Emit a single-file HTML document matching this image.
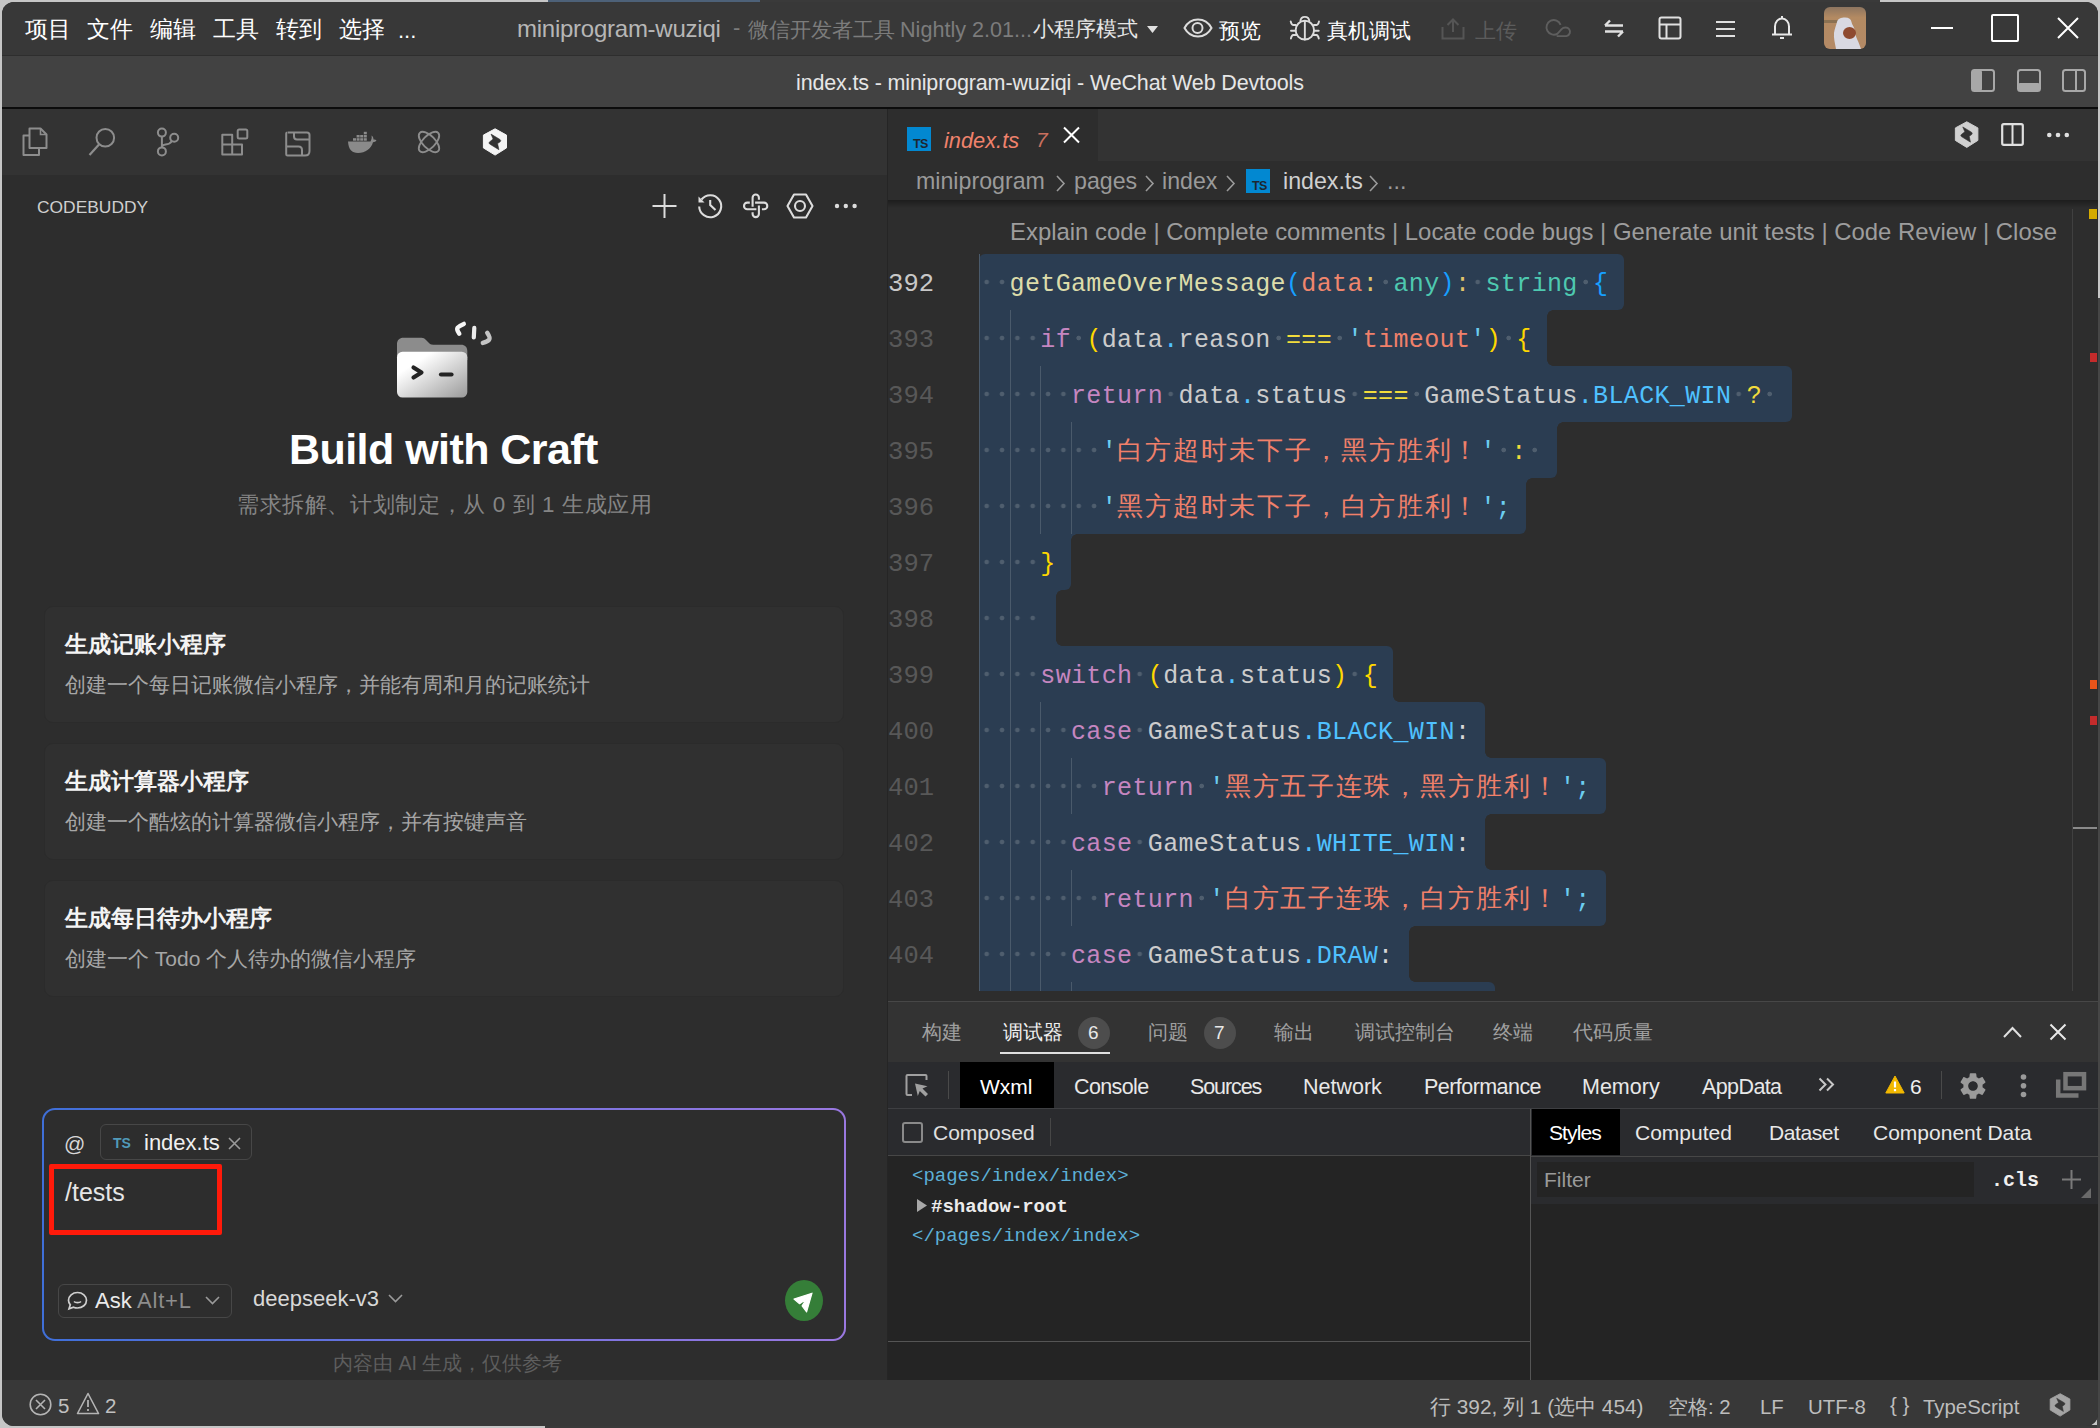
<!DOCTYPE html>
<html><head><meta charset="utf-8">
<style>
html,body{margin:0;padding:0}
body{width:2100px;height:1428px;overflow:hidden;position:relative;background:#c6c6c6;font-family:"Liberation Sans",sans-serif}
.a{position:absolute}
.t{position:absolute;white-space:pre;line-height:1;font-family:"Liberation Sans",sans-serif}
.m{font-family:"Liberation Mono",monospace}
svg{position:absolute;overflow:visible}
#win{position:absolute;left:0;top:0;width:2100px;height:1428px;clip-path:inset(2px 2px 2px 2px round 12px);background:#2d2d2d}
.code .ln{position:absolute;left:0;height:56px;white-space:pre}
.cl{font-size:25px;letter-spacing:0.35px;white-space:pre}
.w{background:radial-gradient(circle at 50% calc(50% - 2.5px),#4f5e6e 0,#4f5e6e 1.9px,rgba(79,94,110,0) 2.7px) 0 0/15.35px 100% repeat-x}
.cj{display:inline-block;font-size:26px;letter-spacing:1.95px;white-space:nowrap;overflow:hidden;vertical-align:top;position:relative;top:-2.5px;font-family:"Liberation Sans",sans-serif}
</style></head><body>
<!-- outside strips -->
<div class="a" style="left:548px;top:0;width:212px;height:3px;background:#4d6178"></div>
<div class="a" style="left:760px;top:0;width:1120px;height:3px;background:#3a3a3a"></div>
<div class="a" style="left:545px;top:1425px;width:1560px;height:3px;background:#3a3a3a"></div>
<div class="a" style="left:2097px;top:298px;width:3px;height:1130px;background:#464646"></div>
<div id="win">
  <!-- title bar -->
  <div class="a" style="left:0;top:0;width:2100px;height:55px;background:#383838"></div>
  <div class="a" style="left:0;top:55px;width:2100px;height:1px;background:#2e2e2e"></div>
  <!-- second bar -->
  <div class="a" style="left:0;top:56px;width:2100px;height:52px;background:#424242"></div>
  <div class="a" style="left:0;top:107px;width:2100px;height:2px;background:#0c0c0c"></div>
  <!-- left activity row -->
  <div class="a" style="left:0;top:109px;width:888px;height:66px;background:#333333"></div>
  <!-- left panel -->
  <div class="a" style="left:0;top:175px;width:887px;height:1205px;background:#2d2d2d"></div>
  <div class="a" style="left:887px;top:109px;width:1px;height:1271px;background:#252525"></div>
  <!-- editor tab bar -->
  <div class="a" style="left:888px;top:109px;width:1212px;height:52px;background:#333333"></div>
  <div class="a" style="left:888px;top:109px;width:210px;height:52px;background:#2d2d2d"></div>
  <!-- breadcrumbs -->
  <div class="a" style="left:888px;top:161px;width:1212px;height:39px;background:#2d2d2d"></div>
  <div class="a" style="left:888px;top:200px;width:1212px;height:8px;background:linear-gradient(#1d1d1d,#2d2d2d)"></div>
  <!-- panel -->
  <div class="a" style="left:888px;top:1001px;width:1212px;height:1px;background:#474747"></div>
  <div class="a" style="left:888px;top:1002px;width:1212px;height:60px;background:#333333"></div>
  <div class="a" style="left:888px;top:1062px;width:1212px;height:46px;background:#2a2b2e"></div>
  <div class="a" style="left:888px;top:1108px;width:1212px;height:272px;background:#242424"></div>
  <!-- status bar -->
  <div class="a" style="left:0;top:1380px;width:2100px;height:48px;background:#383838"></div>

  <!-- ===== TITLE BAR CONTENT ===== -->
  <div class="t" style="left:25px;top:18px;font-size:23px;color:#fff">项目</div>
  <div class="t" style="left:87px;top:18px;font-size:23px;color:#fff">文件</div>
  <div class="t" style="left:150px;top:18px;font-size:23px;color:#fff">编辑</div>
  <div class="t" style="left:213px;top:18px;font-size:23px;color:#fff">工具</div>
  <div class="t" style="left:276px;top:18px;font-size:23px;color:#fff">转到</div>
  <div class="t" style="left:339px;top:18px;font-size:23px;color:#fff">选择</div>
  <div class="t" style="left:398px;top:20px;font-size:22px;color:#fff">...</div>
  <div class="t" style="left:517px;top:17px;font-size:24px;letter-spacing:-0.25px;color:#b6b6b6">miniprogram-wuziqi</div>
  <div class="t" style="left:733px;top:17px;font-size:22px;color:#7c7c7c">-</div>
  <div class="t" style="left:748px;top:19px;font-size:21px;color:#7c7c7c">微信开发者工具</div>
  <div class="t" style="left:900px;top:19px;font-size:21.6px;color:#7c7c7c">Nightly 2.01...</div>
  <div class="t" style="left:1033px;top:19px;font-size:21.4px;color:#e6e6e6">小程序模式</div>
  <svg style="left:1147px;top:26px" width="11" height="7"><path d="M0 0H11L5.5 7Z" fill="#e0e0e0"/></svg>
  <!-- eye -->
  <svg style="left:1183px;top:18px" width="30" height="20" viewBox="0 0 30 20"><path d="M1.5 10C5 3.5 9.5 1.5 15 1.5S25 3.5 28.5 10C25 16.5 20.5 18.5 15 18.5S5 16.5 1.5 10Z" fill="none" stroke="#dcdcdc" stroke-width="2"/><circle cx="14.5" cy="10" r="5" fill="none" stroke="#dcdcdc" stroke-width="2"/></svg>
  <div class="t" style="left:1219px;top:20px;font-size:21px;color:#fff">预览</div>
  <!-- bug -->
  <svg style="left:1289px;top:16px" width="32" height="25" viewBox="0 0 32 25"><ellipse cx="15.85" cy="14.15" rx="9.2" ry="9.4" fill="none" stroke="#dcdcdc" stroke-width="1.9"/><path d="M11.3 5.5C11.6 2.5 13.5 0.9 15.85 0.9S20.1 2.5 20.4 5.5" fill="none" stroke="#dcdcdc" stroke-width="1.9"/><path d="M15.85 5V23.5M1.7 5.4Q2.5 9 4 9H6.8M30 5.4Q29.2 9 27.7 9H24.9M2 14.8H6.6M29.7 14.8H25.1M1.9 22.5Q2.6 19.1 4.3 19H7.5M29.8 22.5Q29.1 19.1 27.4 19H24.2" fill="none" stroke="#dcdcdc" stroke-width="1.9" stroke-linecap="round"/></svg>
  <div class="t" style="left:1327px;top:20px;font-size:21px;color:#fff">真机调试</div>
  <!-- upload -->
  <svg style="left:1441px;top:18px" width="24" height="22" viewBox="0 0 24 22"><path d="M1.5 9V20.5H22.5V9M12 1.5V14M6.5 7L12 1.5 17.5 7" fill="none" stroke="#555" stroke-width="2"/></svg>
  <div class="t" style="left:1475px;top:20px;font-size:21px;color:#5c5c5c">上传</div>
  <!-- cloud loop -->
  <svg style="left:1545px;top:18px" width="27" height="21" viewBox="0 0 27 21"><path d="M15.6 6.8A7.3 7.3 0 1 0 12.6 15.6L16.6 11.2C18.6 9 22.4 8.8 24.2 11.3 25.7 13.4 25.2 17.2 21.4 18.1H11.7" fill="none" stroke="#5e5e5e" stroke-width="1.9"/></svg>
  <!-- swap -->
  <svg style="left:1603px;top:19px" width="22" height="19" viewBox="0 0 22 19"><path d="M2 6.5H20M2 6.5L7 1.5M20 12.5H2M20 12.5L15 17.5" fill="none" stroke="#e0e0e0" stroke-width="2.4"/></svg>
  <!-- layout -->
  <svg style="left:1658px;top:16px" width="24" height="24" viewBox="0 0 24 24"><rect x="1.5" y="1.5" width="21" height="21" rx="2" fill="none" stroke="#e0e0e0" stroke-width="2"/><path d="M1.5 8.5H22.5M8.5 8.5V22.5" stroke="#e0e0e0" stroke-width="2"/></svg>
  <!-- hamburger -->
  <svg style="left:1716px;top:20px" width="20" height="18" viewBox="0 0 20 18"><path d="M0 2H19M0 9H19M0 16H19" stroke="#e0e0e0" stroke-width="2"/></svg>
  <!-- bell -->
  <svg style="left:1771px;top:15px" width="22" height="26" viewBox="0 0 22 26"><path d="M4 19V11.5C4 7 7 3.5 11 3.5S18 7 18 11.5V19M1 19.5H21M11 1V3.5M9 23H13" fill="none" stroke="#e8e8e8" stroke-width="2"/></svg>
  <!-- avatar -->
  <svg style="left:1824px;top:7px" width="42" height="42" viewBox="0 0 42 42"><defs><clipPath id="avc"><rect width="42" height="42" rx="6"/></clipPath><linearGradient id="avg" x1="0" y1="0" x2="0" y2="1"><stop offset="0" stop-color="#8d7560"/><stop offset="0.25" stop-color="#b38a62"/><stop offset="1" stop-color="#b48a66"/></linearGradient></defs><g clip-path="url(#avc)"><rect width="42" height="42" fill="url(#avg)"/><rect x="0" y="13" width="14" height="3" fill="#6f6048" opacity="0.6"/><path d="M12 42C11 36 9.5 31 10 26 10.5 22 12 19 13 15 14 11.5 17 10.5 21 10.5S27 12 27.5 15C28.5 19 31 21 31 25 31 29 35 35 37 42Z" fill="#d9d9e2"/><ellipse cx="25.5" cy="26" rx="6.5" ry="6" fill="#8e4a30"/></g></svg>
  <!-- window controls -->
  <div class="a" style="left:1931px;top:27px;width:22px;height:2px;background:#fff"></div>
  <div class="a" style="left:1991px;top:14px;width:24px;height:24px;border:2px solid #fff;border-radius:2px"></div>
  <svg style="left:2057px;top:17px" width="22" height="22" viewBox="0 0 22 22"><path d="M1 1L21 21M21 1L1 21" stroke="#fff" stroke-width="2"/></svg>

  <!-- ===== SECOND BAR ===== -->
  <div class="t" style="left:796px;top:73px;font-size:21.5px;letter-spacing:-0.15px;color:#e6e6e6">index.ts - miniprogram-wuziqi - WeChat Web Devtools</div>
  <svg style="left:1971px;top:69px" width="24" height="23" viewBox="0 0 24 23"><rect x="1" y="1" width="22" height="21" rx="2.5" fill="none" stroke="#a8a8a8" stroke-width="2"/><rect x="1" y="1" width="10" height="21" rx="2" fill="#a8a8a8"/></svg>
  <svg style="left:2017px;top:69px" width="24" height="23" viewBox="0 0 24 23"><rect x="1" y="1" width="22" height="21" rx="2.5" fill="none" stroke="#a8a8a8" stroke-width="2"/><rect x="1" y="14" width="22" height="8" rx="2" fill="#a8a8a8"/></svg>
  <svg style="left:2062px;top:69px" width="24" height="23" viewBox="0 0 24 23"><rect x="1" y="1" width="22" height="21" rx="2.5" fill="none" stroke="#a8a8a8" stroke-width="2"/><path d="M14 1V22" stroke="#a8a8a8" stroke-width="2"/></svg>
  <!-- ===== LEFT ACTIVITY ICONS ===== -->
  <svg style="left:21px;top:127px" width="28" height="30" viewBox="0 0 28 30"><path d="M8.5 8.5H2.5V28H18V22" fill="none" stroke="#8d8d8d" stroke-width="2" stroke-linejoin="round"/><path d="M8.5 1.5H19.5L25.5 7.5V21H8.5Z" fill="none" stroke="#8d8d8d" stroke-width="2" stroke-linejoin="round"/><path d="M19.5 1.5V7.5H25.5" fill="none" stroke="#8d8d8d" stroke-width="1.6"/></svg>
  <svg style="left:88px;top:127px" width="30" height="30" viewBox="0 0 30 30"><circle cx="17.3" cy="10.7" r="8.8" fill="none" stroke="#8d8d8d" stroke-width="2"/><path d="M11 17.5L1.5 28" stroke="#8d8d8d" stroke-width="2.2"/></svg>
  <svg style="left:155px;top:127px" width="26" height="30" viewBox="0 0 26 30"><circle cx="6.9" cy="5.6" r="4" fill="none" stroke="#8d8d8d" stroke-width="2"/><circle cx="6.9" cy="24.4" r="4" fill="none" stroke="#8d8d8d" stroke-width="2"/><circle cx="19.2" cy="10.7" r="4" fill="none" stroke="#8d8d8d" stroke-width="2"/><path d="M6.9 9.6V20.4M17 14C15.5 16.5 13 17.3 10.5 17.5C8.5 17.7 7 18.5 6.9 20" fill="none" stroke="#8d8d8d" stroke-width="2"/></svg>
  <svg style="left:219px;top:127px" width="31" height="30" viewBox="0 0 31 30"><path d="M3.3 7.7H13.2V17.5H23V27.4H3.3Z" fill="none" stroke="#8d8d8d" stroke-width="2" stroke-linejoin="round"/><path d="M3.3 17.5H13.2V27.4" fill="none" stroke="#8d8d8d" stroke-width="2"/><rect x="18.7" y="2.6" width="9.6" height="9" rx="1.5" fill="none" stroke="#8d8d8d" stroke-width="2"/></svg>
  <svg style="left:285px;top:131px" width="26" height="26" viewBox="0 0 26 26"><path d="M3 1.5H22C23.5 1.5 24.5 2.5 24.5 4V20M24.5 20C24.5 23 23 24.5 20 24.5H2.5C1.8 24.5 1.2 24 1.2 23.3V2.5C1.2 2 1.8 1.5 2.5 1.5" fill="none" stroke="#8d8d8d" stroke-width="2"/><path d="M9 1.5V5.5C9 7.5 10 8.5 12 8.5H24.5M1.2 15.5H13.5C15.5 15.5 17 17 17 19V24.5" fill="none" stroke="#8d8d8d" stroke-width="2"/></svg>
  <svg style="left:347px;top:131px" width="30" height="23" viewBox="0 0 30 23"><path d="M1 10.5H23.5C24.5 8.5 25 7 24.5 4.5C26 5.5 26.5 7 26.5 8.5C27.5 8.2 28.5 8.5 29.5 9.3C28.5 10.8 27.5 11.2 26 11.3C24 18 18.5 22 11 22C5 22 1.5 18.5 1 10.5Z" fill="#8a8a8a"/><rect x="6" y="7.2" width="3" height="2.5" fill="#8a8a8a"/><rect x="9.6" y="7.2" width="3" height="2.5" fill="#8a8a8a"/><rect x="13.2" y="7.2" width="3" height="2.5" fill="#8a8a8a"/><rect x="16.8" y="7.2" width="3" height="2.5" fill="#8a8a8a"/><rect x="9.6" y="4" width="3" height="2.5" fill="#8a8a8a"/><rect x="13.2" y="4" width="3" height="2.5" fill="#8a8a8a"/><rect x="16.8" y="4" width="3" height="2.5" fill="#8a8a8a"/><rect x="16.8" y="0.8" width="3" height="2.5" fill="#8a8a8a"/></svg>
  <svg style="left:416px;top:129px" width="26" height="26" viewBox="0 0 26 26"><ellipse cx="13" cy="13" rx="13" ry="6.2" transform="rotate(45 13 13)" fill="none" stroke="#8d8d8d" stroke-width="1.9"/><ellipse cx="13" cy="13" rx="13" ry="6.2" transform="rotate(-45 13 13)" fill="none" stroke="#8d8d8d" stroke-width="1.9"/></svg>
  <svg style="left:482px;top:128px" width="26" height="28" viewBox="0 0 26 28"><path d="M13.1 0.8L24.5 7.1V19.9L13.1 27.1 1.4 19.9V7.1Z" fill="#f4f4f4" stroke="#f4f4f4" stroke-width="1" stroke-linejoin="round"/><path d="M9 6.1L18 11.5Q19.4 12.6 18.2 13.8L15.6 15.6 16.9 21.7 7.6 16Q6.3 15 7.5 13.9L11.1 11.1Z" fill="#333" stroke="#333" stroke-width="0.6" stroke-linejoin="round"/></svg>

  <!-- ===== CODEBUDDY HEADER ===== -->
  <div class="t" style="left:37px;top:199px;font-size:17.4px;color:#cfcfcf">CODEBUDDY</div>
  <svg style="left:652px;top:194px" width="25" height="24" viewBox="0 0 25 24"><path d="M0.5 12H24.5M12.5 0V24" stroke="#dcdcdc" stroke-width="2"/></svg>
  <svg style="left:697px;top:193px" width="27" height="27" viewBox="0 0 27 27"><path d="M4.5 6.5A11 11 0 1 1 2.2 13.5" fill="none" stroke="#dcdcdc" stroke-width="2.1"/><path d="M1.5 3.5V9.5H7.5Z" fill="#dcdcdc"/><path d="M13.2 7V12L18.5 17" fill="none" stroke="#dcdcdc" stroke-width="2.1"/></svg>
  <svg style="left:742px;top:192px" width="28" height="28" viewBox="0 0 28 28"><path d="M10.6 14.7V5.7A3.15 3.15 0 0 1 16.9 5.7V7.8M13.1 10.6H22A3.3 3.3 0 0 1 22 17.2H19.9M16.9 13.6V22A3.15 3.15 0 0 1 10.6 22V20.2M14.4 17.2H5.3A3.3 3.3 0 0 1 5.3 10.6H7.8" fill="none" stroke="#dcdcdc" stroke-width="2.1"/></svg>
  <svg style="left:786px;top:193px" width="28" height="26" viewBox="0 0 28 26"><path d="M8 1.5H20L26.5 13 20 24.5H8L1.5 13Z" fill="none" stroke="#dcdcdc" stroke-width="2.1" stroke-linejoin="round"/><circle cx="14" cy="13" r="5" fill="none" stroke="#dcdcdc" stroke-width="2.1"/></svg>
  <svg style="left:834px;top:203px" width="24" height="6" viewBox="0 0 24 6"><circle cx="3" cy="3" r="2.2" fill="#dcdcdc"/><circle cx="11.8" cy="3" r="2.2" fill="#dcdcdc"/><circle cx="20.6" cy="3" r="2.2" fill="#dcdcdc"/></svg>

  <!-- ===== BUILD WITH CRAFT ===== -->
  <svg style="left:395px;top:320px" width="100" height="80" viewBox="0 0 100 80">
    <defs><linearGradient id="fg" x1="0" y1="0" x2="1" y2="1"><stop offset="0.25" stop-color="#ffffff"/><stop offset="1" stop-color="#9a9a9a"/></linearGradient>
    <linearGradient id="sg" x1="0" y1="0" x2="1" y2="1"><stop offset="0" stop-color="#ffffff"/><stop offset="1" stop-color="#b0b0b0"/></linearGradient></defs>
    <path d="M2 24C2 20 4.5 17.7 8.5 17.7H26.5C28.5 17.7 29.5 18.5 31 20L34.5 23.5C35.5 24.3 36.5 24.7 38 24.7H66C70 24.7 72.3 27 72.3 31V40H2Z" fill="#8c8c8c"/>
    <rect x="2" y="31.7" width="70.3" height="45.8" rx="5.5" fill="url(#fg)"/>
    <path d="M18.5 47.5L26.5 52.5 18.5 57.5" fill="none" stroke="#232323" stroke-width="4.2" stroke-linecap="round" stroke-linejoin="round"/>
    <path d="M46 54.5H56.5" stroke="#232323" stroke-width="4.2" stroke-linecap="round"/>
    <path d="M64.3 13.8Q61.2 9.2 62.6 7.6T68.8 3.9" fill="none" stroke="#f6f6f6" stroke-width="4.4" stroke-linecap="round" stroke-linejoin="round"/>
    <path d="M79.3 7.8L78.8 17.5" stroke="#ececec" stroke-width="4.2" stroke-linecap="round"/>
    <path d="M92.2 12.8Q95.6 17.8 94.2 19.6T87.8 22.9" fill="none" stroke="#c4c4c4" stroke-width="4.4" stroke-linecap="round" stroke-linejoin="round"/>
  </svg>
  <div class="t" style="left:289px;top:428px;font-size:43px;letter-spacing:-0.55px;font-weight:700;color:#ffffff">Build with Craft</div>
  <div class="t" style="left:237px;top:494px;font-size:22.4px;letter-spacing:0.62px;color:#858585">需求拆解、计划制定，从 0 到 1 生成应用</div>

  <!-- ===== CARDS ===== -->
  <div class="a" style="left:44px;top:606px;width:800px;height:117px;border-radius:9px;background:#303030;border:1px solid #2b2b2b;box-sizing:border-box"></div>
  <div class="t" style="left:65px;top:633px;font-size:23px;font-weight:700;color:#f4f4f4">生成记账小程序</div>
  <div class="t" style="left:65px;top:674px;font-size:21px;color:#a6a6a6">创建一个每日记账微信小程序，并能有周和月的记账统计</div>
  <div class="a" style="left:44px;top:743px;width:800px;height:117px;border-radius:9px;background:#303030;border:1px solid #2b2b2b;box-sizing:border-box"></div>
  <div class="t" style="left:65px;top:770px;font-size:23px;font-weight:700;color:#f4f4f4">生成计算器小程序</div>
  <div class="t" style="left:65px;top:811px;font-size:21px;color:#a6a6a6">创建一个酷炫的计算器微信小程序，并有按键声音</div>
  <div class="a" style="left:44px;top:880px;width:800px;height:117px;border-radius:9px;background:#303030;border:1px solid #2b2b2b;box-sizing:border-box"></div>
  <div class="t" style="left:65px;top:907px;font-size:23px;font-weight:700;color:#f4f4f4">生成每日待办小程序</div>
  <div class="t" style="left:65px;top:948px;font-size:21px;color:#a6a6a6">创建一个 Todo 个人待办的微信小程序</div>

  <!-- ===== INPUT BOX ===== -->
  <div class="a" style="left:42px;top:1108px;width:804px;height:233px;border-radius:13px;background:linear-gradient(90deg,#3f6fd8,#6f72e0 50%,#9a78e0)"></div>
  <div class="a" style="left:44px;top:1110px;width:800px;height:229px;border-radius:11px;background:#2d2d2d"></div>
  <div class="t" style="left:64px;top:1133px;font-size:21px;color:#d8d8d8">@</div>
  <div class="a" style="left:100px;top:1124px;width:152px;height:36px;border:1px solid #474747;border-radius:6px;box-sizing:border-box"></div>
  <div class="t" style="left:113px;top:1136px;font-size:14px;font-weight:700;color:#519aba">TS</div>
  <div class="t" style="left:144px;top:1132px;font-size:22px;color:#f0f0f0">index.ts</div>
  <svg style="left:228px;top:1137px" width="13" height="13" viewBox="0 0 13 13"><path d="M1 1L12 12M12 1L1 12" stroke="#9a9a9a" stroke-width="1.6"/></svg>
  <div class="a" style="left:49px;top:1164px;width:173px;height:71px;border:5px solid #ff1a0a;border-radius:2px;box-sizing:border-box"></div>
  <div class="t" style="left:65px;top:1180px;font-size:25px;color:#e6e6e6">/tests</div>
  <div class="a" style="left:58px;top:1284px;width:174px;height:34px;border:1px solid #474747;border-radius:6px;box-sizing:border-box"></div>
  <svg style="left:67px;top:1291px" width="21" height="20" viewBox="0 0 21 20"><path d="M10.5 1.5C15.5 1.5 19.5 5 19.5 9.3S15.5 17 10.5 17C9 17 7.7 16.7 6.5 16.2L2 17.8 3.3 13.8C2.1 12.5 1.5 11 1.5 9.3 1.5 5 5.5 1.5 10.5 1.5Z" fill="none" stroke="#cfcfcf" stroke-width="1.7"/><path d="M7 10.5C8.3 12 12.7 12 14 10.5" fill="none" stroke="#cfcfcf" stroke-width="1.6"/></svg>
  <div class="t" style="left:95px;top:1290px;font-size:22px;color:#eaeaea">Ask</div>
  <div class="t" style="left:137px;top:1290px;font-size:22px;letter-spacing:0.8px;color:#8d8d8d">Alt+L</div>
  <svg style="left:205px;top:1296px" width="15" height="9" viewBox="0 0 15 9"><path d="M1 1L7.5 7.5 14 1" fill="none" stroke="#9a9a9a" stroke-width="1.6"/></svg>
  <div class="t" style="left:253px;top:1288px;font-size:22px;color:#d8d8d8">deepseek-v3</div>
  <svg style="left:388px;top:1294px" width="15" height="9" viewBox="0 0 15 9"><path d="M1 1L7.5 7.5 14 1" fill="none" stroke="#9a9a9a" stroke-width="1.6"/></svg>
  <div class="a" style="left:785px;top:1280px;width:38px;height:41px;border-radius:50%;background:#357e38"></div>
  <svg style="left:785px;top:1280px" width="38" height="41" viewBox="0 0 38 41"><path d="M27 13.2L9 19.1 14.6 23.7 21.3 19.3 17.1 25.8 21.6 31.9Z" fill="#fff" stroke="#fff" stroke-width="1.2" stroke-linejoin="round"/></svg>
  <div class="t" style="left:333px;top:1354px;font-size:19.6px;color:#5e5e5e">内容由 AI 生成，仅供参考</div>

  <!-- ===== EDITOR TABS ===== -->
  <svg style="left:907px;top:127px" width="24" height="24" viewBox="0 0 24 24"><rect width="24" height="24" fill="#0288d1"/><text x="6" y="21" font-family="Liberation Sans" font-size="12.5" font-weight="700" fill="#1d2730" letter-spacing="-0.6">TS</text></svg>
  <div class="t" style="left:944px;top:130px;font-size:21.8px;font-style:italic;color:#f0826c">index.ts</div>
  <div class="t" style="left:1036px;top:129px;font-size:21px;font-style:italic;color:#c8705e">7</div>
  <svg style="left:1063px;top:127px" width="17" height="16" viewBox="0 0 17 16"><path d="M1 0.5L16 15.5M16 0.5L1 15.5" stroke="#ffffff" stroke-width="2"/></svg>
  <svg style="left:1954.3px;top:121px" width="25.35" height="27.3" viewBox="0 0 26 28"><path d="M13.1 0.8L24.5 7.1V19.9L13.1 27.1 1.4 19.9V7.1Z" fill="#d0d0d0" stroke="#d0d0d0" stroke-width="1" stroke-linejoin="round"/><path d="M9 6.1L18 11.5Q19.4 12.6 18.2 13.8L15.6 15.6 16.9 21.7 7.6 16Q6.3 15 7.5 13.9L11.1 11.1Z" fill="#333" stroke="#333" stroke-width="0.6" stroke-linejoin="round"/></svg>
  <svg style="left:2001px;top:123px" width="23" height="23" viewBox="0 0 23 23"><rect x="1.2" y="1.2" width="20.6" height="20.6" rx="1.5" fill="none" stroke="#e0e0e0" stroke-width="2.2"/><path d="M11.5 1.5V21.5" stroke="#e0e0e0" stroke-width="2"/></svg>
  <svg style="left:2046px;top:132px" width="24" height="6" viewBox="0 0 24 6"><circle cx="3.3" cy="3" r="2.3" fill="#e0e0e0"/><circle cx="12" cy="3" r="2.3" fill="#e0e0e0"/><circle cx="20.8" cy="3" r="2.3" fill="#e0e0e0"/></svg>
  <!-- ===== BREADCRUMBS ===== -->
  <div class="t" style="left:916px;top:170px;font-size:23.2px;color:#9a9a9a">miniprogram</div>
  <svg style="left:1056px;top:175px" width="9" height="17" viewBox="0 0 9 17"><path d="M1 1L8 8.5 1 16" fill="none" stroke="#9a9a9a" stroke-width="1.6"/></svg>
  <div class="t" style="left:1074px;top:170px;font-size:23.2px;color:#9a9a9a">pages</div>
  <svg style="left:1145px;top:175px" width="9" height="17" viewBox="0 0 9 17"><path d="M1 1L8 8.5 1 16" fill="none" stroke="#9a9a9a" stroke-width="1.6"/></svg>
  <div class="t" style="left:1162px;top:170px;font-size:23.2px;color:#9a9a9a">index</div>
  <svg style="left:1226px;top:175px" width="9" height="17" viewBox="0 0 9 17"><path d="M1 1L8 8.5 1 16" fill="none" stroke="#9a9a9a" stroke-width="1.6"/></svg>
  <svg style="left:1246px;top:169px" width="24" height="24" viewBox="0 0 24 24"><rect width="24" height="24" fill="#0288d1"/><text x="6" y="21" font-family="Liberation Sans" font-size="12.5" font-weight="700" fill="#1d2730" letter-spacing="-0.6">TS</text></svg>
  <div class="t" style="left:1283px;top:170px;font-size:23.2px;color:#d0d0d0">index.ts</div>
  <svg style="left:1369px;top:175px" width="9" height="17" viewBox="0 0 9 17"><path d="M1 1L8 8.5 1 16" fill="none" stroke="#9a9a9a" stroke-width="1.6"/></svg>
  <div class="t" style="left:1387px;top:170px;font-size:23.2px;color:#9a9a9a">...</div>
  <!-- ===== CODE LENS ===== -->
  <div class="t" style="left:1010px;top:220px;font-size:23.9px;color:#9d9d9d">Explain code | Complete comments | Locate code bugs | Generate unit tests | Code Review | Close</div>
<!--EDSTART-->
<div class="a" style="left:888px;top:209px;width:1184px;height:782px;overflow:hidden">
<div class="a" style="left:90.90px;top:45px;width:644.70px;height:56px;background:#2b3d52;border-radius:6px 6px 6px 0"></div>
<div class="a" style="left:90.90px;top:45px;width:1.2px;height:56px;background:#4a5a6b"></div>
<div class="a" style="left:90.90px;top:101px;width:567.95px;height:56px;background:#2b3d52;border-radius:0 0 0 0"></div>
<div class="a" style="left:658.85px;top:101px;width:6px;height:6px;background:radial-gradient(circle at 100% 100%,rgba(43,61,82,0) 5.5px,#2b3d52 6px)"></div>
<div class="a" style="left:658.85px;top:151px;width:6px;height:6px;background:radial-gradient(circle at 100% 0%,rgba(43,61,82,0) 5.5px,#2b3d52 6px)"></div>
<div class="a" style="left:90.90px;top:101px;width:1.2px;height:56px;background:#4a5a6b"></div>
<div class="a" style="left:121.60px;top:101px;width:1.2px;height:56px;background:#4a5a6b"></div>
<div class="a" style="left:90.90px;top:157px;width:813.55px;height:56px;background:#2b3d52;border-radius:0 6px 6px 0"></div>
<div class="a" style="left:90.90px;top:157px;width:1.2px;height:56px;background:#4a5a6b"></div>
<div class="a" style="left:121.60px;top:157px;width:1.2px;height:56px;background:#4a5a6b"></div>
<div class="a" style="left:152.30px;top:157px;width:1.2px;height:56px;background:#4a5a6b"></div>
<div class="a" style="left:90.90px;top:213px;width:578.25px;height:56px;background:#2b3d52;border-radius:0 0 6px 0"></div>
<div class="a" style="left:669.15px;top:213px;width:6px;height:6px;background:radial-gradient(circle at 100% 100%,rgba(43,61,82,0) 5.5px,#2b3d52 6px)"></div>
<div class="a" style="left:90.90px;top:213px;width:1.2px;height:56px;background:#4a5a6b"></div>
<div class="a" style="left:121.60px;top:213px;width:1.2px;height:56px;background:#4a5a6b"></div>
<div class="a" style="left:152.30px;top:213px;width:1.2px;height:56px;background:#4a5a6b"></div>
<div class="a" style="left:183.00px;top:213px;width:1.2px;height:56px;background:#4a5a6b"></div>
<div class="a" style="left:90.90px;top:269px;width:547.55px;height:56px;background:#2b3d52;border-radius:0 0 6px 0"></div>
<div class="a" style="left:638.45px;top:269px;width:6px;height:6px;background:radial-gradient(circle at 100% 100%,rgba(43,61,82,0) 5.5px,#2b3d52 6px)"></div>
<div class="a" style="left:90.90px;top:269px;width:1.2px;height:56px;background:#4a5a6b"></div>
<div class="a" style="left:121.60px;top:269px;width:1.2px;height:56px;background:#4a5a6b"></div>
<div class="a" style="left:152.30px;top:269px;width:1.2px;height:56px;background:#4a5a6b"></div>
<div class="a" style="left:183.00px;top:269px;width:1.2px;height:56px;background:#4a5a6b"></div>
<div class="a" style="left:90.90px;top:325px;width:92.10px;height:56px;background:#2b3d52;border-radius:0 0 6px 0"></div>
<div class="a" style="left:183.00px;top:325px;width:6px;height:6px;background:radial-gradient(circle at 100% 100%,rgba(43,61,82,0) 5.5px,#2b3d52 6px)"></div>
<div class="a" style="left:90.90px;top:325px;width:1.2px;height:56px;background:#4a5a6b"></div>
<div class="a" style="left:121.60px;top:325px;width:1.2px;height:56px;background:#4a5a6b"></div>
<div class="a" style="left:90.90px;top:381px;width:76.75px;height:56px;background:#2b3d52;border-radius:0 0 0 0"></div>
<div class="a" style="left:167.65px;top:381px;width:6px;height:6px;background:radial-gradient(circle at 100% 100%,rgba(43,61,82,0) 5.5px,#2b3d52 6px)"></div>
<div class="a" style="left:167.65px;top:431px;width:6px;height:6px;background:radial-gradient(circle at 100% 0%,rgba(43,61,82,0) 5.5px,#2b3d52 6px)"></div>
<div class="a" style="left:90.90px;top:381px;width:1.2px;height:56px;background:#4a5a6b"></div>
<div class="a" style="left:121.60px;top:381px;width:1.2px;height:56px;background:#4a5a6b"></div>
<div class="a" style="left:90.90px;top:437px;width:414.45px;height:56px;background:#2b3d52;border-radius:0 6px 0 0"></div>
<div class="a" style="left:505.35px;top:487px;width:6px;height:6px;background:radial-gradient(circle at 100% 0%,rgba(43,61,82,0) 5.5px,#2b3d52 6px)"></div>
<div class="a" style="left:90.90px;top:437px;width:1.2px;height:56px;background:#4a5a6b"></div>
<div class="a" style="left:121.60px;top:437px;width:1.2px;height:56px;background:#4a5a6b"></div>
<div class="a" style="left:90.90px;top:493px;width:506.55px;height:56px;background:#2b3d52;border-radius:0 6px 0 0"></div>
<div class="a" style="left:597.45px;top:543px;width:6px;height:6px;background:radial-gradient(circle at 100% 0%,rgba(43,61,82,0) 5.5px,#2b3d52 6px)"></div>
<div class="a" style="left:90.90px;top:493px;width:1.2px;height:56px;background:#4a5a6b"></div>
<div class="a" style="left:121.60px;top:493px;width:1.2px;height:56px;background:#4a5a6b"></div>
<div class="a" style="left:152.30px;top:493px;width:1.2px;height:56px;background:#4a5a6b"></div>
<div class="a" style="left:90.90px;top:549px;width:627.05px;height:56px;background:#2b3d52;border-radius:0 6px 6px 0"></div>
<div class="a" style="left:90.90px;top:549px;width:1.2px;height:56px;background:#4a5a6b"></div>
<div class="a" style="left:121.60px;top:549px;width:1.2px;height:56px;background:#4a5a6b"></div>
<div class="a" style="left:152.30px;top:549px;width:1.2px;height:56px;background:#4a5a6b"></div>
<div class="a" style="left:183.00px;top:549px;width:1.2px;height:56px;background:#4a5a6b"></div>
<div class="a" style="left:90.90px;top:605px;width:506.55px;height:56px;background:#2b3d52;border-radius:0 0 0 0"></div>
<div class="a" style="left:597.45px;top:605px;width:6px;height:6px;background:radial-gradient(circle at 100% 100%,rgba(43,61,82,0) 5.5px,#2b3d52 6px)"></div>
<div class="a" style="left:597.45px;top:655px;width:6px;height:6px;background:radial-gradient(circle at 100% 0%,rgba(43,61,82,0) 5.5px,#2b3d52 6px)"></div>
<div class="a" style="left:90.90px;top:605px;width:1.2px;height:56px;background:#4a5a6b"></div>
<div class="a" style="left:121.60px;top:605px;width:1.2px;height:56px;background:#4a5a6b"></div>
<div class="a" style="left:152.30px;top:605px;width:1.2px;height:56px;background:#4a5a6b"></div>
<div class="a" style="left:90.90px;top:661px;width:627.05px;height:56px;background:#2b3d52;border-radius:0 6px 6px 0"></div>
<div class="a" style="left:90.90px;top:661px;width:1.2px;height:56px;background:#4a5a6b"></div>
<div class="a" style="left:121.60px;top:661px;width:1.2px;height:56px;background:#4a5a6b"></div>
<div class="a" style="left:152.30px;top:661px;width:1.2px;height:56px;background:#4a5a6b"></div>
<div class="a" style="left:183.00px;top:661px;width:1.2px;height:56px;background:#4a5a6b"></div>
<div class="a" style="left:90.90px;top:717px;width:429.80px;height:56px;background:#2b3d52;border-radius:0 0 0 0"></div>
<div class="a" style="left:520.70px;top:717px;width:6px;height:6px;background:radial-gradient(circle at 100% 100%,rgba(43,61,82,0) 5.5px,#2b3d52 6px)"></div>
<div class="a" style="left:520.70px;top:767px;width:6px;height:6px;background:radial-gradient(circle at 100% 0%,rgba(43,61,82,0) 5.5px,#2b3d52 6px)"></div>
<div class="a" style="left:90.90px;top:717px;width:1.2px;height:56px;background:#4a5a6b"></div>
<div class="a" style="left:121.60px;top:717px;width:1.2px;height:56px;background:#4a5a6b"></div>
<div class="a" style="left:152.30px;top:717px;width:1.2px;height:56px;background:#4a5a6b"></div>
<div class="a" style="left:90.90px;top:773px;width:516.40px;height:56px;background:#2b3d52;border-radius:0 6px 6px 0"></div>
<div class="a" style="left:90.90px;top:773px;width:1.2px;height:56px;background:#4a5a6b"></div>
<div class="a" style="left:121.60px;top:773px;width:1.2px;height:56px;background:#4a5a6b"></div>
<div class="a" style="left:152.30px;top:773px;width:1.2px;height:56px;background:#4a5a6b"></div>
<div class="a" style="left:183.00px;top:773px;width:1.2px;height:56px;background:#4a5a6b"></div>
<div class="t m" style="left:0px;top:47.5px;width:46px;text-align:right;font-size:25.5px;line-height:56px;color:#c8c8c8">392</div>
<div class="t m cl" style="left:90.90px;top:47.5px;line-height:56px"><span class="w">  </span><span style="color:#dcdcaa">getGameOverMessage</span><span style="color:#179fff">(</span><span style="color:#f0866d">data</span><span style="color:#e2c56a">:</span><span class="w"> </span><span style="color:#4ec9b0">any</span><span style="color:#179fff">)</span><span style="color:#e2c56a">:</span><span class="w"> </span><span style="color:#4ec9b0">string</span><span class="w"> </span><span style="color:#179fff">{</span></div>
<div class="t m" style="left:0px;top:103.5px;width:46px;text-align:right;font-size:25.5px;line-height:56px;color:#585858">393</div>
<div class="t m cl" style="left:90.90px;top:103.5px;line-height:56px"><span class="w">    </span><span style="color:#c586c0">if</span><span class="w"> </span><span style="color:#ffd700">(</span><span style="color:#cccccc">data</span><span style="color:#4fc1ff">.</span><span style="color:#cccccc">reason</span><span class="w"> </span><span style="color:#f2dc3c">===</span><span class="w"> </span><span style="color:#6ccdf0">'</span><span style="color:#f0806a">timeout</span><span style="color:#6ccdf0">'</span><span style="color:#ffd700">)</span><span class="w"> </span><span style="color:#ffd700">{</span></div>
<div class="t m" style="left:0px;top:159.5px;width:46px;text-align:right;font-size:25.5px;line-height:56px;color:#585858">394</div>
<div class="t m cl" style="left:90.90px;top:159.5px;line-height:56px"><span class="w">      </span><span style="color:#c586c0">return</span><span class="w"> </span><span style="color:#cccccc">data</span><span style="color:#4fc1ff">.</span><span style="color:#cccccc">status</span><span class="w"> </span><span style="color:#f2dc3c">===</span><span class="w"> </span><span style="color:#cccccc">GameStatus</span><span style="color:#4fc1ff">.</span><span style="color:#4fc1ff">BLACK_WIN</span><span class="w"> </span><span style="color:#f2dc3c">?</span><span class="w"> </span></div>
<div class="t m" style="left:0px;top:215.5px;width:46px;text-align:right;font-size:25.5px;line-height:56px;color:#585858">395</div>
<div class="t m cl" style="left:90.90px;top:215.5px;line-height:56px"><span class="w">        </span><span style="color:#6ccdf0">'</span><span style="color:#f0806a"><span class="cj" style="width:363.35px">白方超时未下子，黑方胜利！</span></span><span style="color:#6ccdf0">'</span><span class="w"> </span><span style="color:#f2dc3c">:</span><span class="w"> </span></div>
<div class="t m" style="left:0px;top:271.5px;width:46px;text-align:right;font-size:25.5px;line-height:56px;color:#585858">396</div>
<div class="t m cl" style="left:90.90px;top:271.5px;line-height:56px"><span class="w">        </span><span style="color:#6ccdf0">'</span><span style="color:#f0806a"><span class="cj" style="width:363.35px">黑方超时未下子，白方胜利！</span></span><span style="color:#6ccdf0">'</span><span style="color:#6ccdf0">;</span></div>
<div class="t m" style="left:0px;top:327.5px;width:46px;text-align:right;font-size:25.5px;line-height:56px;color:#585858">397</div>
<div class="t m cl" style="left:90.90px;top:327.5px;line-height:56px"><span class="w">    </span><span style="color:#ffd700">}</span></div>
<div class="t m" style="left:0px;top:383.5px;width:46px;text-align:right;font-size:25.5px;line-height:56px;color:#585858">398</div>
<div class="t m cl" style="left:90.90px;top:383.5px;line-height:56px"><span class="w">    </span></div>
<div class="t m" style="left:0px;top:439.5px;width:46px;text-align:right;font-size:25.5px;line-height:56px;color:#585858">399</div>
<div class="t m cl" style="left:90.90px;top:439.5px;line-height:56px"><span class="w">    </span><span style="color:#c586c0">switch</span><span class="w"> </span><span style="color:#ffd700">(</span><span style="color:#cccccc">data</span><span style="color:#4fc1ff">.</span><span style="color:#cccccc">status</span><span style="color:#ffd700">)</span><span class="w"> </span><span style="color:#ffd700">{</span></div>
<div class="t m" style="left:0px;top:495.5px;width:46px;text-align:right;font-size:25.5px;line-height:56px;color:#585858">400</div>
<div class="t m cl" style="left:90.90px;top:495.5px;line-height:56px"><span class="w">      </span><span style="color:#c586c0">case</span><span class="w"> </span><span style="color:#cccccc">GameStatus</span><span style="color:#4fc1ff">.</span><span style="color:#4fc1ff">BLACK_WIN</span><span style="color:#d8d8d8">:</span></div>
<div class="t m" style="left:0px;top:551.5px;width:46px;text-align:right;font-size:25.5px;line-height:56px;color:#585858">401</div>
<div class="t m cl" style="left:90.90px;top:551.5px;line-height:56px"><span class="w">        </span><span style="color:#c586c0">return</span><span class="w"> </span><span style="color:#6ccdf0">'</span><span style="color:#f0806a"><span class="cj" style="width:335.40px">黑方五子连珠，黑方胜利！</span></span><span style="color:#6ccdf0">'</span><span style="color:#6ccdf0">;</span></div>
<div class="t m" style="left:0px;top:607.5px;width:46px;text-align:right;font-size:25.5px;line-height:56px;color:#585858">402</div>
<div class="t m cl" style="left:90.90px;top:607.5px;line-height:56px"><span class="w">      </span><span style="color:#c586c0">case</span><span class="w"> </span><span style="color:#cccccc">GameStatus</span><span style="color:#4fc1ff">.</span><span style="color:#4fc1ff">WHITE_WIN</span><span style="color:#d8d8d8">:</span></div>
<div class="t m" style="left:0px;top:663.5px;width:46px;text-align:right;font-size:25.5px;line-height:56px;color:#585858">403</div>
<div class="t m cl" style="left:90.90px;top:663.5px;line-height:56px"><span class="w">        </span><span style="color:#c586c0">return</span><span class="w"> </span><span style="color:#6ccdf0">'</span><span style="color:#f0806a"><span class="cj" style="width:335.40px">白方五子连珠，白方胜利！</span></span><span style="color:#6ccdf0">'</span><span style="color:#6ccdf0">;</span></div>
<div class="t m" style="left:0px;top:719.5px;width:46px;text-align:right;font-size:25.5px;line-height:56px;color:#585858">404</div>
<div class="t m cl" style="left:90.90px;top:719.5px;line-height:56px"><span class="w">      </span><span style="color:#c586c0">case</span><span class="w"> </span><span style="color:#cccccc">GameStatus</span><span style="color:#4fc1ff">.</span><span style="color:#4fc1ff">DRAW</span><span style="color:#d8d8d8">:</span></div>
</div>
<!--EDEND-->
  <!-- overview ruler -->
  <div class="a" style="left:2072px;top:209px;width:1px;height:782px;background:#404040"></div>
  <div class="a" style="left:2089px;top:209px;width:8px;height:10px;background:#d4aa00"></div>
  <div class="a" style="left:2090px;top:353px;width:7px;height:9px;background:#c42b2b"></div>
  <div class="a" style="left:2090px;top:680px;width:7px;height:9px;background:#e8541a"></div>
  <div class="a" style="left:2090px;top:716px;width:7px;height:9px;background:#c42b2b"></div>
  <div class="a" style="left:2073px;top:827px;width:24px;height:2px;background:#8a8a8a"></div>

  <!-- ===== PANEL TABS ===== -->
  <div class="t" style="left:922px;top:1022px;font-size:20px;color:#a0a0a0">构建</div>
  <div class="t" style="left:1003px;top:1022px;font-size:20px;color:#f0f0f0">调试器</div>
  <div class="a" style="left:1078px;top:1017px;width:32px;height:32px;border-radius:50%;background:#4d4d4d"></div>
  <div class="t" style="left:1088px;top:1023px;font-size:19px;color:#e8e8e8">6</div>
  <div class="a" style="left:1000px;top:1052px;width:110px;height:2px;background:#e0e0e0"></div>
  <div class="t" style="left:1148px;top:1022px;font-size:20px;color:#a0a0a0">问题</div>
  <div class="a" style="left:1204px;top:1017px;width:32px;height:32px;border-radius:50%;background:#4d4d4d"></div>
  <div class="t" style="left:1214px;top:1023px;font-size:19px;color:#e8e8e8">7</div>
  <div class="t" style="left:1274px;top:1022px;font-size:20px;color:#a0a0a0">输出</div>
  <div class="t" style="left:1355px;top:1022px;font-size:20px;color:#a0a0a0">调试控制台</div>
  <div class="t" style="left:1493px;top:1022px;font-size:20px;color:#a0a0a0">终端</div>
  <div class="t" style="left:1573px;top:1022px;font-size:20px;color:#a0a0a0">代码质量</div>
  <svg style="left:2003px;top:1026px" width="19" height="12" viewBox="0 0 19 12"><path d="M1 11L9.5 2 18 11" fill="none" stroke="#e0e0e0" stroke-width="2"/></svg>
  <svg style="left:2050px;top:1024px" width="16" height="16" viewBox="0 0 16 16"><path d="M0.5 0.5L15.5 15.5M15.5 0.5L0.5 15.5" stroke="#e8e8e8" stroke-width="2"/></svg>
  <!-- ===== DEVTOOLS TOOLBAR ===== -->
  <svg style="left:905px;top:1073px" width="26" height="26" viewBox="0 0 26 26"><path d="M7 22H2.5C2 22 1.5 21.5 1.5 21V3C1.5 2.5 2 2 2.5 2H20.5C21 2 21.5 2.5 21.5 3V7" fill="none" stroke="#a0a0a0" stroke-width="2"/><path d="M10 10.5L12.8 23 14.8 18 20.5 23.5 23 21 17.5 15.5 22.5 13.2Z" fill="#a0a0a0"/></svg>
  <div class="a" style="left:948px;top:1071px;width:1px;height:28px;background:#4a4a4a"></div>
  <div class="a" style="left:960px;top:1062px;width:94px;height:46px;background:#000000"></div>
  <div class="t" style="left:980px;top:1076px;font-size:21px;color:#ffffff">Wxml</div>
  <div class="t" style="left:1074px;top:1077px;font-size:21.5px;letter-spacing:-0.63px;color:#e8e8e8">Console</div>
  <div class="t" style="left:1190px;top:1077px;font-size:21.5px;letter-spacing:-1.1px;color:#e8e8e8">Sources</div>
  <div class="t" style="left:1303px;top:1077px;font-size:21.5px;color:#e8e8e8">Network</div>
  <div class="t" style="left:1424px;top:1077px;font-size:21.5px;letter-spacing:-0.55px;color:#e8e8e8">Performance</div>
  <div class="t" style="left:1582px;top:1077px;font-size:21.5px;color:#e8e8e8">Memory</div>
  <div class="t" style="left:1702px;top:1077px;font-size:21.5px;letter-spacing:-0.6px;color:#e8e8e8">AppData</div>
  <svg style="left:1818px;top:1077px" width="17" height="15" viewBox="0 0 17 15"><path d="M1.5 1.5L7.5 7.5 1.5 13.5M9 1.5L15 7.5 9 13.5" fill="none" stroke="#c8c8c8" stroke-width="2"/></svg>
  <svg style="left:1885px;top:1075px" width="20" height="19" viewBox="0 0 20 19"><path d="M10 1L19.2 18H0.8Z" fill="#f2b800" stroke="#f2b800" stroke-width="1" stroke-linejoin="round"/><path d="M10 6.5V12.5" stroke="#fff" stroke-width="2.2"/><rect x="8.9" y="14" width="2.2" height="2.2" fill="#fff"/></svg>
  <div class="t" style="left:1910px;top:1076px;font-size:21px;color:#f0f0f0">6</div>
  <div class="a" style="left:1941px;top:1071px;width:1px;height:28px;background:#4a4a4a"></div>
  <svg style="left:1957.4px;top:1069.9px" width="32" height="32" viewBox="0 0 24 24"><path fill="#9a9a9a" d="M19.14 12.94c.04-.3.06-.61.06-.94 0-.32-.02-.64-.07-.94l2.03-1.58c.18-.14.23-.41.12-.61l-1.92-3.32c-.12-.22-.37-.29-.59-.22l-2.39.96c-.5-.38-1.03-.7-1.62-.94l-.36-2.54c-.04-.24-.24-.41-.48-.41h-3.84c-.24 0-.43.17-.47.41l-.36 2.54c-.59.24-1.13.57-1.62.94l-2.39-.96c-.22-.08-.47 0-.59.22L2.74 8.87c-.12.21-.08.47.12.61l2.03 1.58c-.05.3-.09.63-.09.94s.02.64.07.94l-2.03 1.58c-.18.14-.23.41-.12.61l1.92 3.32c.12.22.37.29.59.22l2.39-.96c.5.38 1.03.7 1.62.94l.36 2.54c.05.24.24.41.48.41h3.84c.24 0 .44-.17.47-.41l.36-2.54c.59-.24 1.13-.56 1.62-.94l2.39.96c.22.08.47 0 .59-.22l1.92-3.32c.12-.22.07-.47-.12-.61l-2.01-1.58zM12 15.6c-1.98 0-3.6-1.62-3.6-3.6s1.62-3.6 3.6-3.6 3.6 1.62 3.6 3.6-1.62 3.6-3.6 3.6z"/></svg>
  <svg style="left:2020px;top:1073px" width="7" height="25" viewBox="0 0 7 25"><circle cx="3.5" cy="4" r="2.8" fill="#9a9a9a"/><circle cx="3.5" cy="12.7" r="2.8" fill="#9a9a9a"/><circle cx="3.5" cy="21.5" r="2.8" fill="#9a9a9a"/></svg>
  <svg style="left:2055px;top:1071px" width="32" height="28" viewBox="0 0 32 28"><rect x="10.5" y="3.2" width="18.5" height="14" fill="none" stroke="#777" stroke-width="4.5"/><path d="M3.2 8.5V24.5H23.5" fill="none" stroke="#777" stroke-width="4.5"/></svg>
  <!-- ===== DEVTOOLS SUB ROW ===== -->
  <div class="a" style="left:888px;top:1108px;width:642px;height:48px;background:#2a2b2e"></div>
  <div class="a" style="left:888px;top:1155px;width:642px;height:1px;background:#474747"></div>
  <div class="a" style="left:902px;top:1122px;width:21px;height:21px;border:2px solid #8a8a8a;border-radius:3px;box-sizing:border-box"></div>
  <div class="t" style="left:933px;top:1122px;font-size:21px;color:#e0e0e0">Composed</div>
  <div class="a" style="left:1050px;top:1118px;width:1px;height:28px;background:#474747"></div>
  <div class="a" style="left:1530px;top:1108px;width:1px;height:272px;background:#555555"></div>
  <div class="a" style="left:1531px;top:1108px;width:567px;height:48px;background:#2a2b2e"></div>
  <div class="a" style="left:1531px;top:1156px;width:567px;height:1px;background:#474747"></div>
  <div class="a" style="left:888px;top:1108px;width:1210px;height:1px;background:#3e3f42"></div>
  <div class="a" style="left:1532px;top:1109px;width:88px;height:46px;background:#000"></div>
  <div class="t" style="left:1549px;top:1122px;font-size:21px;letter-spacing:-0.9px;color:#ffffff">Styles</div>
  <div class="t" style="left:1635px;top:1122px;font-size:21px;color:#e8e8e8">Computed</div>
  <div class="t" style="left:1769px;top:1122px;font-size:21px;letter-spacing:-0.4px;color:#e8e8e8">Dataset</div>
  <div class="t" style="left:1873px;top:1122px;font-size:21px;color:#e8e8e8">Component Data</div>
  <div class="a" style="left:1531px;top:1157px;width:567px;height:47px;background:#2a2b2e"></div>
  <div class="a" style="left:1537px;top:1162px;width:437px;height:35px;background:#242424"></div>
  <div class="t" style="left:1544px;top:1169px;font-size:21px;color:#9a9a9a">Filter</div>
  <div class="t m" style="left:1991px;top:1171px;font-size:20px;font-weight:700;color:#f0f0f0">.cls</div>
  <svg style="left:2062px;top:1170px" width="19" height="19" viewBox="0 0 19 19"><path d="M0 9.5H19M9.5 0V19" stroke="#7a7a7a" stroke-width="2"/></svg>
  <svg style="left:2081px;top:1188px" width="10" height="17" viewBox="0 0 10 17"><path d="M10 0V10H0Z" fill="#6a6a6a"/></svg>
  <!-- ===== WXML TREE ===== -->
  <div class="t m" style="left:912px;top:1167px;font-size:19px;color:#5db0d7">&lt;pages/index/index&gt;</div>
  <svg style="left:917px;top:1199px" width="10" height="13" viewBox="0 0 10 13"><path d="M0 0L10 6.5 0 13Z" fill="#a8a8a8"/></svg>
  <div class="t m" style="left:931px;top:1198px;font-size:19px;font-weight:700;color:#ececec">#shadow-root</div>
  <div class="t m" style="left:912px;top:1227px;font-size:19px;color:#5db0d7">&lt;/pages/index/index&gt;</div>
  <div class="a" style="left:888px;top:1341px;width:642px;height:1px;background:#555555"></div>
  <!-- ===== STATUS BAR ===== -->
  <svg style="left:29px;top:1393px" width="23" height="23" viewBox="0 0 23 23"><circle cx="11.5" cy="11.5" r="10.3" fill="none" stroke="#b4b4b4" stroke-width="1.6"/><path d="M7 7L16 16M16 7L7 16" stroke="#b4b4b4" stroke-width="1.6"/></svg>
  <div class="t" style="left:58px;top:1396px;font-size:20.5px;color:#c0c0c0">5</div>
  <svg style="left:76px;top:1392px" width="24" height="23" viewBox="0 0 24 23"><path d="M12 1.5L22.5 21.5H1.5Z" fill="none" stroke="#b4b4b4" stroke-width="1.6" stroke-linejoin="round"/><path d="M12 8V15M12 17V19" stroke="#b4b4b4" stroke-width="1.8"/></svg>
  <div class="t" style="left:105px;top:1396px;font-size:20.5px;color:#c0c0c0">2</div>
  <div class="t" style="left:1430px;top:1397px;font-size:20.8px;color:#bdbdbd">行 392, 列 1 (选中 454)</div>
  <div class="t" style="left:1668px;top:1397px;font-size:20.4px;color:#bdbdbd">空格: 2</div>
  <div class="t" style="left:1760px;top:1397px;font-size:20.4px;color:#bdbdbd">LF</div>
  <div class="t" style="left:1808px;top:1397px;font-size:20.4px;color:#bdbdbd">UTF-8</div>
  <div class="t" style="left:1890px;top:1395px;font-size:20.4px;color:#bdbdbd">{ }</div>
  <div class="t" style="left:1923px;top:1397px;font-size:20.4px;color:#bdbdbd">TypeScript</div>
  <svg style="left:2048.8px;top:1393.1px" width="22.2" height="23.9" viewBox="0 0 26 28"><path d="M13.1 0.8L24.5 7.1V19.9L13.1 27.1 1.4 19.9V7.1Z" fill="#a4a4a4" stroke="#a4a4a4" stroke-width="1" stroke-linejoin="round"/><path d="M9 6.1L18 11.5Q19.4 12.6 18.2 13.8L15.6 15.6 16.9 21.7 7.6 16Q6.3 15 7.5 13.9L11.1 11.1Z" fill="#383838" stroke="#383838" stroke-width="0.6" stroke-linejoin="round"/></svg>

</div>
</body></html>
